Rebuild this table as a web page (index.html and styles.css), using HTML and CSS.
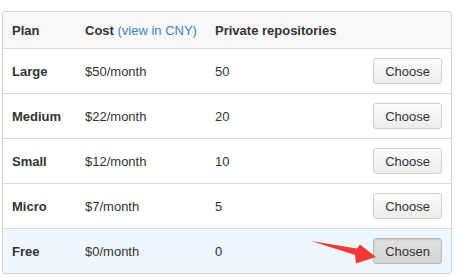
FILE: index.html
```html
<!DOCTYPE html>
<html>
<head>
<meta charset="utf-8">
<link rel="stylesheet" href="styles.css">
</head>
<body>
<div class="plans">
  <table class="plan-table">
    <thead>
      <tr>
        <th class="col-plan">Plan</th>
        <th class="col-cost">Cost <a class="cny" href="#">(view in CNY)</a></th>
        <th class="col-repos">Private repositories</th>
        <th class="col-action"></th>
      </tr>
    </thead>
    <tbody>
      <tr>
        <td class="name">Large</td>
        <td>$50/month</td>
        <td>50</td>
        <td class="action"><button class="btn">Choose</button></td>
      </tr>
      <tr>
        <td class="name">Medium</td>
        <td>$22/month</td>
        <td>20</td>
        <td class="action"><button class="btn">Choose</button></td>
      </tr>
      <tr>
        <td class="name">Small</td>
        <td>$12/month</td>
        <td>10</td>
        <td class="action"><button class="btn">Choose</button></td>
      </tr>
      <tr>
        <td class="name">Micro</td>
        <td>$7/month</td>
        <td>5</td>
        <td class="action"><button class="btn">Choose</button></td>
      </tr>
      <tr class="current">
        <td class="name">Free</td>
        <td>$0/month</td>
        <td>0</td>
        <td class="action"><button class="btn btn-chosen">Chosen</button></td>
      </tr>
    </tbody>
  </table>
  <svg class="pointer" width="72" height="32" viewBox="0 0 72 32">
    <polygon points="3,5 49,12.5 52,8.5 68,21 48,27.5 47,19" fill="#f03a3a"/>
  </svg>
</div>
</body>
</html>
```

FILE: styles.css
```css
html, body {
  margin: 0;
  padding: 0;
  background: #fff;
}

body {
  font-family: "Liberation Sans", Arial, sans-serif;
  font-size: 13px;
  color: #333;
}

.plans {
  position: relative;
  padding: 11px 0 0 2px;
}

.plan-table {
  width: 450px;
  border-collapse: separate;
  border-spacing: 0;
  border: 1px solid #d2d2d2;
  border-radius: 3px;
  overflow: hidden;
}

.plan-table th,
.plan-table td {
  text-align: left;
  padding: 0 0 0 9px;
  border-bottom: 1px solid #d8d8d8;
  white-space: nowrap;
}

.plan-table tbody tr:last-child td {
  border-bottom: none;
}

.plan-table thead th {
  height: 36px;
  background: #f8f8f8;
  font-weight: bold;
}

.plan-table tbody td {
  height: 44px;
}

.col-plan { width: 64px; }
.col-cost { width: 121px; }
.col-repos { width: 120px; }

.cny {
  color: #4183c4;
  font-weight: normal;
  text-decoration: none;
}

.name {
  font-weight: bold;
}

.action {
  text-align: right !important;
  padding-right: 9px !important;
}

.current td {
  background: #f0f6fd;
}

.btn {
  font-family: "Liberation Sans", Arial, sans-serif;
  font-size: 13px;
  color: #333;
  height: 26px;
  padding: 0 11px;
  border: 1px solid #d0d0d0;
  border-radius: 3px;
  background: linear-gradient(#fcfcfc, #ececec);
  vertical-align: middle;
  margin: 0;
}

.btn-chosen {
  background: linear-gradient(#e0e0e0, #d4d4d4);
  border-color: #bdbdbd;
  box-shadow: inset 0 1px 2px rgba(0, 0, 0, 0.12);
}

.pointer {
  position: absolute;
  left: 308px;
  top: 236px;
}
```
